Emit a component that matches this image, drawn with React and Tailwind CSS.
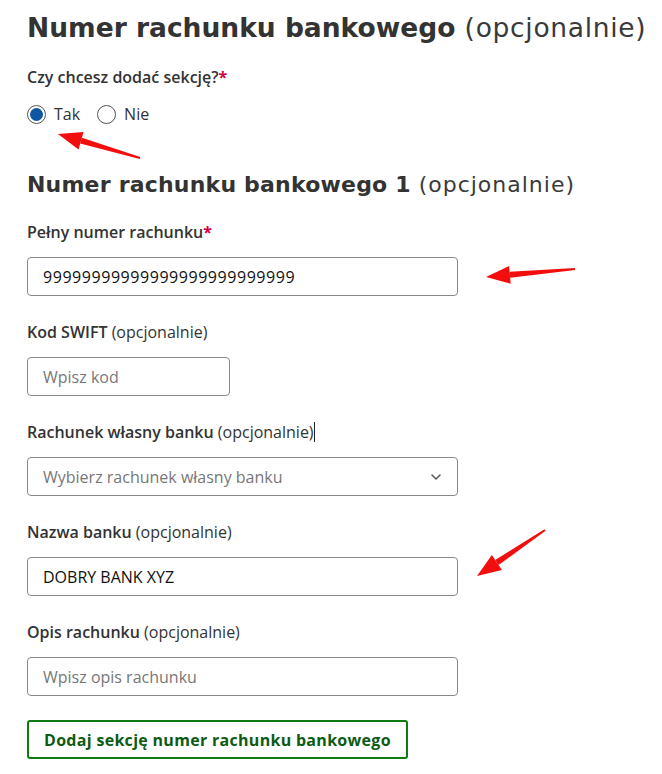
import { ChevronDown } from 'lucide-react';

function Label({ children, required, optional }) {
  return (
    <div className="text-[16px] leading-[22px] text-[#333] font-semibold">
      {children}
      {required && <span className="text-[#d1003c] font-bold">*</span>}
      {optional && <span className="font-normal"> (opcjonalnie)</span>}
    </div>
  );
}

function Field({ label, required, optional, width = 'w-[431px]', value, placeholder, mono }) {
  return (
    <div className="flex flex-col gap-[14px]">
      <Label required={required} optional={optional}>{label}</Label>
      <div className={`${width} h-[39px] border border-[#8a8a8a] rounded-[4px] flex items-center px-[15px] text-[16px]`}>
        {value ? (
          <span className={mono ? 'text-[#111] tracking-[0.55px]' : 'text-[#111]'}>{value}</span>
        ) : (
          <span className="text-[#777]">{placeholder}</span>
        )}
      </div>
    </div>
  );
}

function Arrow({ x1, y1, x2, y2 }) {
  const dx = x2 - x1;
  const dy = y2 - y1;
  const len = Math.hypot(dx, dy);
  const ux = dx / len;
  const uy = dy / len;
  const px = -uy;
  const py = ux;
  const bx = x2 - ux * 24;
  const by = y2 - uy * 24;
  const head = `${x2},${y2} ${bx + px * 9},${by + py * 9} ${bx - px * 9},${by - py * 9}`;
  const tail = `${x1 + px},${y1 + py} ${x1 - px},${y1 - py} ${bx - px * 3},${by - py * 3} ${bx + px * 3},${by + py * 3}`;
  return (
    <svg className="absolute inset-0 pointer-events-none" width="662" height="774" viewBox="0 0 662 774">
      <polygon points={tail} fill="#f30e0e" />
      <polygon points={head} fill="#f30e0e" />
    </svg>
  );
}

const headFont = { fontFamily: '"DejaVu Sans", sans-serif' };

export default function App() {
  return (
    <div className="relative w-[662px] h-[774px] bg-white overflow-hidden" style={{ fontFamily: '"Open Sans", sans-serif' }}>
      <div className="pl-[27px] pt-[10px] flex flex-col">
        <h1 className="text-[26.5px] leading-[36px] text-[#333] font-bold whitespace-nowrap" style={headFont}>
          Numer rachunku bankowego <span className="font-normal text-[#3a3a3a] tracking-[0.7px]">(opcjonalnie)</span>
        </h1>
        <div className="mt-[20px]">
          <Label required>Czy chcesz dodać sekcję?</Label>
        </div>
        <div className="mt-[14px] flex items-center gap-[17px] text-[16px] text-[#333]">
          <label className="flex items-center gap-[8px]">
            <span className="w-[19px] h-[19px] rounded-full border border-[#555] flex items-center justify-center">
              <span className="w-[13px] h-[13px] rounded-full bg-[#0b57a4]" />
            </span>
            Tak
          </label>
          <label className="flex items-center gap-[8px]">
            <span className="w-[19px] h-[19px] rounded-full border border-[#555]" />
            Nie
          </label>
        </div>
        <h2 className="mt-[44px] text-[22px] leading-[30px] text-[#333] font-bold whitespace-nowrap tracking-[0.2px]" style={headFont}>
          Numer rachunku bankowego 1 <span className="font-normal text-[#3a3a3a] tracking-[1px]">(opcjonalnie)</span>
        </h2>
        <div className="mt-[21px] flex flex-col gap-[25px]">
          <Field label="Pełny numer rachunku" required value="99999999999999999999999999" mono />
          <Field label="Kod SWIFT" optional width="w-[203px]" placeholder="Wpisz kod" />
          <div className="flex flex-col gap-[14px]">
            <div className="flex items-center">
              <Label optional>Rachunek własny banku</Label>
              <span className="w-px h-[20px] bg-[#222]" />
            </div>
            <div className="w-[431px] h-[39px] border border-[#8a8a8a] rounded-[4px] flex items-center justify-between pl-[15px] pr-[13px] text-[16px]">
              <span className="text-[#777]">Wybierz rachunek własny banku</span>
              <ChevronDown size={16} strokeWidth={2.2} className="text-[#555]" />
            </div>
          </div>
          <Field label="Nazwa banku" optional value="DOBRY BANK XYZ" />
          <Field label="Opis rachunku" optional placeholder="Wpisz opis rachunku" />
        </div>
        <div className="mt-[24px]">
          <button className="h-[39px] px-[15px] border-2 border-[#0f7b0f] rounded-[3px] text-[#0d5b12] text-[16px] font-bold tracking-[0.3px]">
            Dodaj sekcję numer rachunku bankowego
          </button>
        </div>
      </div>
      <Arrow x1={140} y1={158} x2={58} y2={134} />
      <Arrow x1={575} y1={269} x2={486} y2={277} />
      <Arrow x1={545} y1={530} x2={477} y2={576} />
    </div>
  );
}
